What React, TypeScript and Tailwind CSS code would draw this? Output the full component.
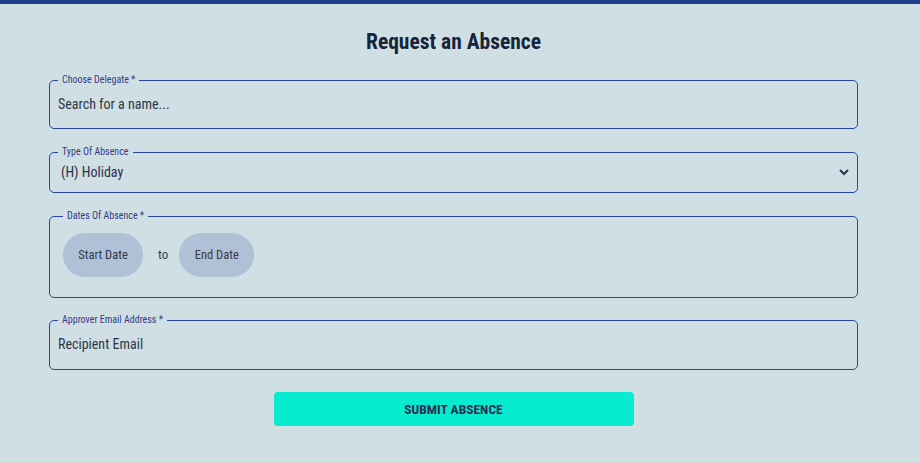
import { useState } from "react";

const font = { fontFamily: '"Roboto Condensed", "Liberation Sans Narrow", Roboto, sans-serif' };

function Field({ label, children, className }: { label: string; children: React.ReactNode; className?: string }) {
  return (
    <fieldset className={`border border-[#2547a3] rounded-[5px] px-2 ${className ?? ""}`}>
      <legend className="ml-0 px-[4px] text-[10px] leading-[12px] text-[#363a8a]">{label}</legend>
      {children}
    </fieldset>
  );
}

export default function App() {
  const [type, setType] = useState("H");

  return (
    <div style={font} className="min-h-[463px] w-full bg-[#d0dfe4] border-t-4 border-[#1f3d8a]">
      <div className="w-[907px]">
        <h1 className="pt-[24px] text-center text-[21.5px] leading-[28px] font-bold text-[#15263a]">
          Request an Absence
        </h1>

        <form className="mx-[49px] mt-[18px] flex flex-col gap-[17px]">
          <Field label="Choose Delegate *" className="pb-[6px]">
            <input
              placeholder="Search for a name..."
              className="w-full h-[36px] bg-transparent outline-none text-[14px] text-[#2d3748] placeholder:text-[#2d3748]"
            />
          </Field>

          <Field label="Type Of Absence" className="pb-[6px] pr-[8px]">
            <div className="relative">
              <select
                value={type}
                onChange={(e) => setType(e.target.value)}
                className="w-full h-[28px] appearance-none bg-transparent outline-none pl-[3px] text-[14px] text-[#2d2f4a]"
              >
                <option value="H">(H) Holiday</option>
                <option value="S">(S) Sick</option>
              </select>
              <svg
                className="pointer-events-none absolute right-0 top-1/2 -translate-y-1/2"
                width="10"
                height="7"
                viewBox="0 0 10 7"
              >
                <path d="M1 1.5 L5 5.5 L9 1.5" fill="none" stroke="#2d2f4a" strokeWidth="2" />
              </svg>
            </div>
          </Field>

          <Field label="Dates Of Absence *" className="pt-[11px] pb-[20px] px-[13px]">
            <div className="flex items-center">
              <button type="button" className="h-[44px] w-[80px] rounded-full bg-[#afc1d6] text-[12.5px] text-[#2d3b4e]">
                Start Date
              </button>
              <span className="ml-[15px] mr-[11px] text-[13px] text-[#2d3b4e]">to</span>
              <button type="button" className="h-[44px] w-[75px] rounded-full bg-[#afc1d6] text-[12.5px] text-[#3e3a3a]">
                End Date
              </button>
            </div>
          </Field>

          <Field label="Approver Email Address *" className="pb-[7px] -mt-px">
            <input
              placeholder="Recipient Email"
              className="w-full h-[36px] bg-transparent outline-none text-[14px] text-[#2d3748] placeholder:text-[#2d3748]"
            />
          </Field>

          <div className="flex justify-center pt-[5px]">
            <button
              type="button"
              className="w-[360px] h-[34px] rounded-[4px] bg-[#07ebcf] text-[13.5px] font-bold uppercase text-[#2e2b52]"
            >
              Submit Absence
            </button>
          </div>
        </form>
      </div>
    </div>
  );
}
